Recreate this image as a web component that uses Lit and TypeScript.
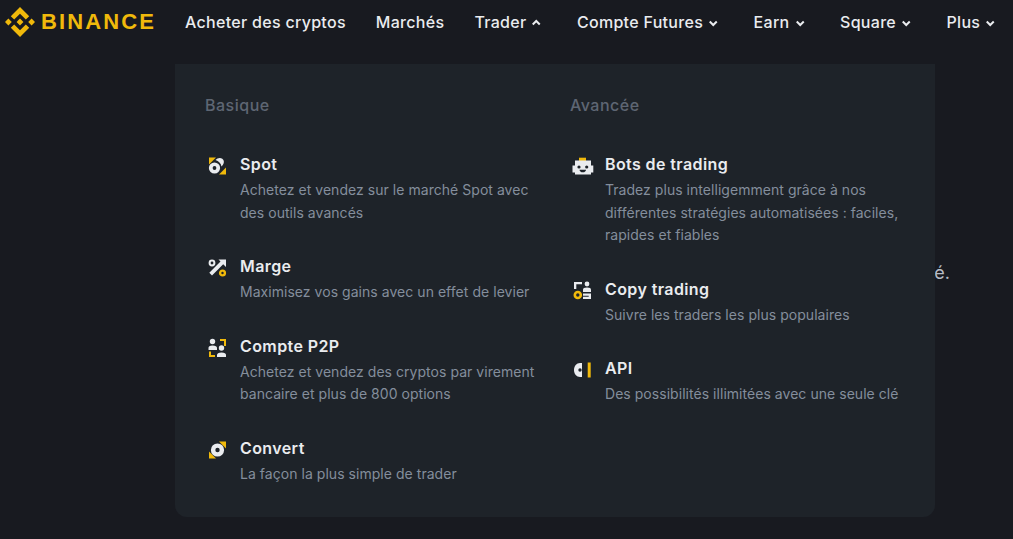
import { LitElement, html, css, svg } from 'lit';
import { customElement } from 'lit/decorators.js';

const icons: Record<string, unknown> = {
  spot: svg`
    <path d="M4 3.500h7l-7 7z" fill="#F0B90B"/><path d="M21 20.500h-7l7-7z" fill="#F0B90B"/>
    <circle cx="9.500" cy="14" r="5.600" fill="#EAECEF"/><circle cx="9.500" cy="14" r="1.900" fill="#1E2329"/>
    <path d="M10.500 6c1.800-2 4.800-2.600 6.800-1.200s2.100 4.200.5 6.200l-1.300 1.500c-.5-3.200-2.800-5.600-6-6.500z" fill="#EAECEF"/>`,
  marge: svg`
    <path d="M21 3.500V11l-2.800-2.800L7 19.500l-2.700-2.700L15.500 5.500l-2-2z" fill="#EAECEF"/>
    <circle cx="7" cy="7" r="2.400" fill="none" stroke="#EAECEF" stroke-width="2"/>
    <circle cx="17.500" cy="17" r="2.400" fill="none" stroke="#F0B90B" stroke-width="2.400"/>`,
  p2p: svg`
    <circle cx="7.500" cy="5.500" r="2.700" fill="#EAECEF"/><path d="M3.500 14v-2c0-1.500 1-2.500 4-2.500s4.500 1 4.500 2.500v2z" fill="#EAECEF"/>
    <circle cx="16.500" cy="12" r="2.700" fill="#EAECEF"/><path d="M12 21v-2c0-1.500 1.500-2.500 4.500-2.500s4.500 1 4.500 2.500v2z" fill="#EAECEF"/>
    <path d="M15 3h6v7h-2V5h-4z" fill="#F0B90B"/><path d="M4 15.500h2V19h4v2H4z" fill="#F0B90B"/>`,
  convert: svg`
    <path d="M14 3.500h7v7z" fill="#F0B90B"/><path d="M4 13.500v7h7z" fill="#F0B90B"/>
    <circle cx="12.500" cy="12" r="6.600" fill="#EAECEF"/><circle cx="12.500" cy="12" r="2.200" fill="#1E2329"/>`,
  bots: svg`
    <path d="M9 3.700h7v3.400H9z" fill="#F0B90B"/>
    <path d="M5 6.500h16v5h2.300v7H21v2H5v-2H2.500v-7H5z" fill="#EAECEF"/>
    <circle cx="9" cy="13" r="1.600" fill="#1E2329"/><circle cx="16.700" cy="13" r="1.600" fill="#1E2329"/>
    <path d="M9.500 15.700h6.500c0 1.500-1.300 2.600-3.200 2.600s-3.300-1.100-3.300-2.600z" fill="#1E2329"/>`,
  copy: svg`
    <path d="M4 3h8v2.300H6.300V10H4z" fill="#EAECEF"/>
    <circle cx="17" cy="5" r="2.400" fill="#EAECEF"/><path d="M13 13v-2.500c0-1.200 1.200-2 4-2s4 .8 4 2V13z" fill="#EAECEF"/>
    <path d="M13 14.500h8V20h-8v-2.200h5.700v-1.100H13z" fill="#EAECEF"/>
    <circle cx="7.800" cy="16" r="3" fill="none" stroke="#F0B90B" stroke-width="2.600"/>`,
  api: svg`
    <path d="M12 5v14h-2C6.500 19 4 16 4 12s2.500-7 6-7z" fill="#EAECEF"/>
    <circle cx="10" cy="12" r="1.700" fill="#1E2329"/>
    <path d="M17.700 4.500h3v15h-3z" fill="#F0B90B"/>`,
};

const basics = [
  { icon: 'spot', title: 'Spot', desc: 'Achetez et vendez sur le marché Spot avec des outils avancés' },
  { icon: 'marge', title: 'Marge', desc: 'Maximisez vos gains avec un effet de levier' },
  { icon: 'p2p', title: 'Compte P2P', desc: 'Achetez et vendez des cryptos par virement bancaire et plus de 800 options' },
  { icon: 'convert', title: 'Convert', desc: 'La façon la plus simple de trader' },
];

const advanced = [
  { icon: 'bots', title: 'Bots de trading', desc: 'Tradez plus intelligemment grâce à nos différentes stratégies automatisées : faciles, rapides et fiables' },
  { icon: 'copy', title: 'Copy trading', desc: 'Suivre les traders les plus populaires' },
  { icon: 'api', title: 'API', desc: 'Des possibilités illimitées avec une seule clé' },
];

const nav = [
  { label: 'Acheter des cryptos' },
  { label: 'Marchés' },
  { label: 'Trader', caret: 'up' },
  { label: 'Compte Futures', caret: 'down' },
  { label: 'Earn', caret: 'down' },
  { label: 'Square', caret: 'down' },
  { label: 'Plus', caret: 'down' },
];

@customElement('app-root')
export class AppRoot extends LitElement {
  static styles = css`
    :host {
      display: block;
      position: relative;
      height: 539px;
      overflow: hidden;
      background: #181a20;
      font-family: Inter, 'Liberation Sans', sans-serif;
    }
    .header {
      display: flex;
      align-items: center;
      height: 44px;
      padding-left: 5px;
    }
    .logo {
      display: flex;
      align-items: center;
      gap: 6px;
      width: 180px;
      color: #f0b90b;
      font: 700 22px 'Liberation Sans', sans-serif;
      letter-spacing: 2.1px;
    }
    .logo svg {
      width: 30px;
      height: 30px;
    }
    .nav {
      display: flex;
      gap: 30px;
      white-space: nowrap;
    }
    .nav-item {
      display: flex;
      align-items: center;
      gap: 3px;
      color: #eaecef;
      font-size: 16px;
      font-weight: 500;
      letter-spacing: 0.3px;
    }
    .nav-item svg {
      width: 17.5px;
      height: 16px;
      margin-top: 2px;
    }
    .behind {
      margin: 218px 63px 0 0;
      color: #b7bdc6;
      font-size: 18px;
      text-align: right;
    }
    .panel {
      position: absolute;
      top: 64px;
      left: 175px;
      width: 760px;
      height: 453px;
      box-sizing: border-box;
      padding: 29px 0 0 30px;
      display: grid;
      grid-template-columns: 365px 335px;
      background: #1e2329;
      border-radius: 0 0 12px 12px;
    }
    .heading {
      margin-bottom: 35px;
      color: #5e6673;
      font-size: 16px;
      font-weight: 500;
      letter-spacing: 0.5px;
      line-height: 25px;
    }
    .list {
      display: flex;
      flex-direction: column;
      gap: 31px;
    }
    .item {
      display: flex;
      gap: 11px;
    }
    .item svg {
      flex: none;
      width: 24px;
      height: 24px;
      margin-top: 1px;
    }
    .title {
      color: #eaecef;
      font-size: 16px;
      font-weight: 600;
      letter-spacing: 0.4px;
      line-height: 24px;
      margin-top: -1px;
      margin-bottom: 3px;
    }
    .desc {
      max-width: 305px;
      color: #848e9c;
      font-size: 14px;
      letter-spacing: 0.04px;
      line-height: 22.5px;
    }
  `;

  renderColumn(heading: string, items: typeof basics) {
    return html`
      <div>
        <div class="heading">${heading}</div>
        <div class="list">
          ${items.map(
            (item) => html`
              <div class="item">
                <svg viewBox="0 0 24 24">${icons[item.icon]}</svg>
                <div>
                  <div class="title">${item.title}</div>
                  <div class="desc">${item.desc}</div>
                </div>
              </div>
            `
          )}
        </div>
      </div>
    `;
  }

  render() {
    return html`
      <div class="header">
        <div class="logo">
          <svg viewBox="0 0 126.61 126.61" fill="#F0B90B">
            <path d="M38.73 53.2l24.59-24.58 24.6 24.6 14.3-14.31L63.32 0 24.43 38.9l14.3 14.3zM0 63.31l14.3-14.31 14.31 14.31-14.31 14.3zM38.73 73.41l24.59 24.59 24.6-24.6 14.31 14.29-38.9 38.91-38.91-38.88v-.03zM98.01 63.33l14.3-14.31 14.3 14.3-14.3 14.32zM77.83 63.32L63.32 48.8 52.59 59.53l-1.24 1.23-2.54 2.54 14.51 14.5 14.51-14.47z"/>
          </svg>
          BINANCE
        </div>
        <div class="nav">
          ${nav.map(
            (n) => html`
              <div class="nav-item">
                ${n.label}
                ${n.caret
                  ? html`<svg viewBox="0 0 17 16" fill="none" stroke="#EAECEF" stroke-width="2">
                      <path d=${n.caret === 'up' ? 'M3.500 9.500 7 6l3.500 3.500' : 'M3.500 6.500 7 10l3.500-3.500'}/>
                    </svg>`
                  : ''}
              </div>
            `
          )}
        </div>
      </div>
      <div class="behind">é.</div>
      <div class="panel">
        ${this.renderColumn('Basique', basics)}
        ${this.renderColumn('Avancée', advanced)}
      </div>
    `;
  }
}
